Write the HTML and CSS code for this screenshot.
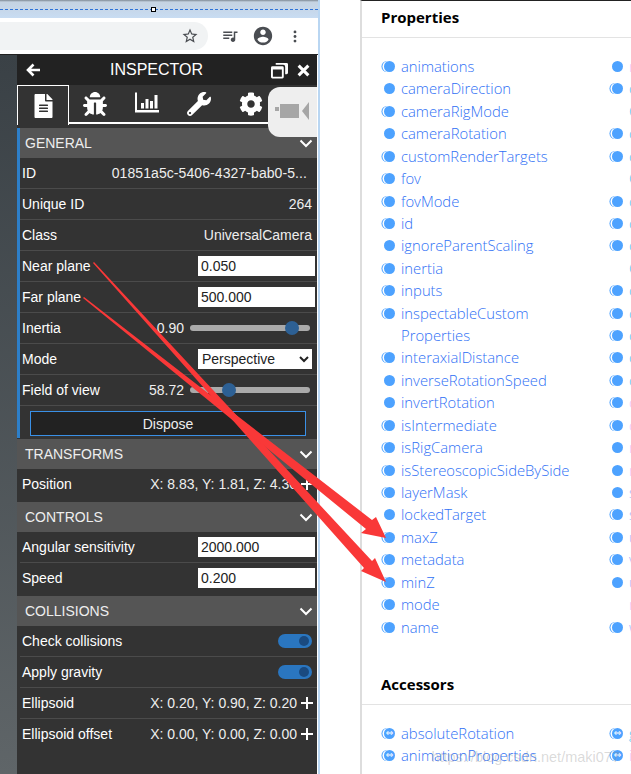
FILE: index.html
```html
<!DOCTYPE html>
<html lang="en">
<head>
<meta charset="utf-8">
<title>Inspector</title>
<link rel="stylesheet" href="styles.css">
</head>
<body>
<div class="page">
  <section class="browser">
    <div class="titlebar"><div class="dash"></div></div>
    <div class="toolbar">
      <div class="pill">
        <svg class="ti star" viewBox="0 0 24 24"><path d="M22 9.24l-7.19-.62L12 2 9.19 8.63 2 9.24l5.46 4.73L5.82 21 12 17.27 18.18 21l-1.63-7.03L22 9.24zM12 15.4l-3.76 2.27 1-4.28-3.32-2.88 4.38-.38L12 6.1l1.71 4.04 4.38.38-3.32 2.88 1 4.28L12 15.4z"/></svg>
      </div>
      <svg class="ti queue" viewBox="0 0 24 24"><path d="M15 6H3v2h12V6zm0 4H3v2h12v-2zM3 16h8v-2H3v2zM17 6v8.18c-.31-.11-.65-.18-1-.18-1.66 0-3 1.34-3 3s1.34 3 3 3 3-1.34 3-3V8h3V6h-5z"/></svg>
      <svg class="ti avatar" viewBox="0 0 24 24"><path d="M12 2C6.48 2 2 6.48 2 12s4.48 10 10 10 10-4.48 10-10S17.52 2 12 2zm0 3c1.66 0 3 1.34 3 3s-1.34 3-3 3-3-1.34-3-3 1.34-3 3-3zm0 14.2c-2.5 0-4.71-1.28-6-3.22.03-1.99 4-3.08 6-3.08 1.99 0 5.97 1.09 6 3.08-1.29 1.94-3.5 3.22-6 3.22z"/></svg>
      <svg class="ti kebab" viewBox="0 0 24 24"><circle cx="12" cy="5.5" r="2"/><circle cx="12" cy="12" r="2"/><circle cx="12" cy="18.500" r="2"/></svg>
    </div>
    <div class="workspace">
      <div class="strip"></div>
      <div class="inspector">
        <header class="ihead">
          <svg class="back" viewBox="0 0 16 16"><path d="M15 8H3M8.500 2.500L3 8l5.500 5.500" fill="none" stroke="#fff" stroke-width="2.600"/></svg>
          <h1 class="ititle">INSPECTOR</h1>
          <svg class="popout" viewBox="0 0 18 18"><path d="M5 1h11.500a1.500 1.500 0 0 1 1.500 1.500v9a1.500 1.500 0 0 1-1.500 1.500H15V5a2 2 0 0 0-2-2H5z" fill="#fff"/><path d="M1.500 4.500H12a1.500 1.500 0 0 1 1.500 1.500v10a1.500 1.500 0 0 1-1.500 1.500H1.500A1.500 1.500 0 0 1 0 16V6a1.500 1.500 0 0 1 1.500-1.500zM2 8v7.500h9.500V8z" fill="#fff"/></svg>
          <svg class="closex" viewBox="0 0 12 12"><path d="M1.500 1.500l9 9M10.500 1.500l-9 9" stroke="#fff" stroke-width="2.800" fill="none"/></svg>
        </header>
        <nav class="tabs">
          <div class="tab active"><svg class="file" viewBox="0 0 384 512"><path d="M224 136V0H24C10.700 0 0 10.700 0 24v464c0 13.300 10.700 24 24 24h336c13.300 0 24-10.700 24-24V160H248c-13.200 0-24-10.800-24-24zm64 236c0 6.600-5.400 12-12 12H108c-6.600 0-12-5.400-12-12v-8c0-6.600 5.400-12 12-12h168c6.600 0 12 5.400 12 12v8zm0-64c0 6.600-5.400 12-12 12H108c-6.600 0-12-5.400-12-12v-8c0-6.600 5.400-12 12-12h168c6.600 0 12 5.400 12 12v8zm0-72v8c0 6.600-5.400 12-12 12H108c-6.600 0-12-5.400-12-12v-8c0-6.600 5.400-12 12-12h168c6.600 0 12 5.400 12 12zm96-114.100v6.100H256V0h6.100c6.400 0 12.500 2.500 17 7l97.900 98c4.500 4.500 7 10.600 7 16.900z"/></svg></div>
          <div class="tab"><svg class="tico" viewBox="0 0 512 512"><path d="M511.988 288.900c-.478 17.430-15.217 31.100-32.653 31.100H424v16c0 21.864-4.882 42.584-13.600 61.145l60.228 60.228c12.496 12.497 12.496 32.758 0 45.255-12.498 12.497-32.759 12.496-45.256 0l-54.736-54.736C345.886 467.965 314.351 480 280 480V236c0-6.627-5.373-12-12-12h-24c-6.627 0-12 5.373-12 12v244c-34.351 0-65.886-12.035-90.636-32.108l-54.736 54.736c-12.498 12.497-32.759 12.496-45.256 0-12.496-12.497-12.496-32.758 0-45.255l60.228-60.228C92.882 378.584 88 357.864 88 336v-16H32.666C15.230 320 .491 306.330.013 288.900-.484 270.816 14.028 256 32 256h56v-58.745l-46.628-46.628c-12.496-12.497-12.496-32.758 0-45.255 12.498-12.497 32.758-12.497 45.256 0L141.255 160h229.489l54.627-54.627c12.498-12.497 32.758-12.497 45.256 0 12.496 12.497 12.496 32.758 0 45.255L424 197.255V256h56c17.972 0 32.484 14.816 31.988 32.900zM257 0c-61.856 0-112 50.144-112 112h224C369 50.144 318.856 0 257 0z"/></svg></div>
          <div class="tab"><svg class="tico" viewBox="0 0 24 24"><path d="M0 0.500h2V18h22v2.500H0z"/><rect x="6" y="11" width="3" height="5.500"/><rect x="10.500" y="7" width="3" height="9.500"/><rect x="15" y="9" width="3" height="7.500"/><rect x="19.500" y="3" width="3" height="13.500"/></svg></div>
          <div class="tab"><svg class="tico" viewBox="0 0 512 512"><path d="M507.730 109.100c-2.240-9.030-13.540-12.090-20.120-5.510l-74.360 74.360-67.880-11.310-11.310-67.880 74.360-74.360c6.620-6.620 3.430-17.900-5.660-20.160-47.380-11.740-99.550.91-136.580 37.930-39.640 39.640-50.550 97.100-34.050 147.200L18.740 402.760c-24.990 24.990-24.990 65.510 0 90.500 24.990 24.990 65.510 24.990 90.500 0l213.210-213.210c50.120 16.710 107.470 5.680 147.370-34.220 37.070-37.070 49.700-89.320 37.910-136.730zM64 472c-13.250 0-24-10.750-24-24 0-13.260 10.750-24 24-24s24 10.740 24 24c0 13.250-10.750 24-24 24z"/></svg></div>
          <div class="tab"><svg class="tico" viewBox="0 0 512 512"><path d="M487.400 315.700l-42.600-24.600c4.300-23.200 4.300-47 0-70.200l42.600-24.600c4.900-2.800 7.100-8.600 5.500-14-11.100-35.600-30-67.800-54.700-94.600-3.800-4.100-10-5.100-14.800-2.300L380.800 110c-17.900-15.400-38.500-27.300-60.800-35.100V25.800c0-5.600-3.900-10.500-9.400-11.700-36.700-8.200-74.300-7.800-109.200 0-5.500 1.200-9.400 6.100-9.400 11.700V75c-22.200 7.900-42.800 19.800-60.800 35.100L88.700 85.500c-4.900-2.800-11-1.900-14.800 2.300-24.700 26.700-43.600 58.900-54.700 94.600-1.700 5.400.6 11.200 5.500 14L67.300 221c-4.300 23.200-4.300 47 0 70.200l-42.600 24.600c-4.900 2.800-7.100 8.600-5.500 14 11.100 35.600 30 67.800 54.700 94.600 3.800 4.100 10 5.100 14.800 2.300l42.600-24.600c17.900 15.400 38.500 27.300 60.800 35.100v49.200c0 5.600 3.900 10.500 9.400 11.700 36.700 8.200 74.300 7.800 109.200 0 5.500-1.200 9.400-6.100 9.400-11.700v-49.200c22.200-7.900 42.800-19.800 60.800-35.100l42.600 24.600c4.900 2.800 11 1.900 14.800-2.300 24.700-26.700 43.600-58.900 54.700-94.600 1.500-5.500-.7-11.300-5.600-14.100zM256 336c-44.100 0-80-35.900-80-80s35.900-80 80-80 80 35.900 80 80-35.900 80-80 80z"/></svg></div>
          <div class="tabfill"></div>
        </nav>
        <div class="camera">
          <svg class="camico" viewBox="0 0 36 24"><rect x="0" y="7" width="4" height="4"/><rect x="5" y="4" width="19" height="14"/><path d="M27 11L34 2v18z"/></svg>
        </div>
        <div class="sections">
          <section class="group accent">
            <h2 class="ghead">GENERAL<svg class="chev" viewBox="0 0 14 9"><path d="M1.500 1.500L7 7l5.500-5.500" fill="none" stroke="#fff" stroke-width="2"/></svg></h2>
            <div class="row"><span>ID</span><span class="val idval">01851a5c-5406-4327-bab0-5...</span></div>
            <div class="row"><span>Unique ID</span><span class="val">264</span></div>
            <div class="row"><span>Class</span><span class="val">UniversalCamera</span></div>
            <div class="row"><span>Near plane</span><input class="num" value="0.050"></div>
            <div class="row"><span>Far plane</span><input class="num" value="500.000"></div>
            <div class="row"><span>Inertia</span><span class="sliderbox"><span class="val">0.90</span><span class="track"><span class="thumb" style="left:95px"></span></span></span></div>
            <div class="row"><span>Mode</span><select class="sel"><option>Perspective</option></select></div>
            <div class="row"><span>Field of view</span><span class="sliderbox"><span class="val">58.72</span><span class="track"><span class="thumb" style="left:32px"></span></span></span></div>
            <div class="btnrow"><button class="dispose">Dispose</button></div>
          </section>
          <section class="group">
            <h2 class="ghead">TRANSFORMS<svg class="chev" viewBox="0 0 14 9"><path d="M1.500 1.500L7 7l5.500-5.500" fill="none" stroke="#fff" stroke-width="2"/></svg></h2>
            <div class="row plain"><span>Position</span><span class="val">X: 8.83, Y: 1.81, Z: 4.30<svg class="plus" viewBox="0 0 12 12"><path d="M6 0v12M0 6h12" stroke="#fff" stroke-width="2"/></svg></span></div>
          </section>
          <section class="group">
            <h2 class="ghead">CONTROLS<svg class="chev" viewBox="0 0 14 9"><path d="M1.500 1.500L7 7l5.500-5.500" fill="none" stroke="#fff" stroke-width="2"/></svg></h2>
            <div class="row"><span>Angular sensitivity</span><input class="num" value="2000.000"></div>
            <div class="row plain"><span>Speed</span><input class="num" value="0.200"></div>
          </section>
          <section class="group">
            <h2 class="ghead">COLLISIONS<svg class="chev" viewBox="0 0 14 9"><path d="M1.500 1.500L7 7l5.500-5.500" fill="none" stroke="#fff" stroke-width="2"/></svg></h2>
            <div class="row"><span>Check collisions</span><span class="toggle"></span></div>
            <div class="row"><span>Apply gravity</span><span class="toggle"></span></div>
            <div class="row"><span>Ellipsoid</span><span class="val">X: 0.20, Y: 0.90, Z: 0.20<svg class="plus" viewBox="0 0 12 12"><path d="M6 0v12M0 6h12" stroke="#fff" stroke-width="2"/></svg></span></div>
            <div class="row plain"><span>Ellipsoid offset</span><span class="val">X: 0.00, Y: 0.00, Z: 0.00<svg class="plus" viewBox="0 0 12 12"><path d="M6 0v12M0 6h12" stroke="#fff" stroke-width="2"/></svg></span></div>
          </section>
        </div>
      </div>
    </div>
    <div class="handle"></div>
  </section>

  <main class="docs">
    <h3 class="dhead">Properties</h3>
    <div class="cols">
      <ul class="list">
        <li class="inh">animations</li>
        <li>cameraDirection</li>
        <li class="inh">cameraRigMode</li>
        <li>cameraRotation</li>
        <li class="inh">customRenderTargets</li>
        <li class="inh">fov</li>
        <li class="inh">fovMode</li>
        <li class="inh">id</li>
        <li>ignoreParentScaling</li>
        <li class="inh">inertia</li>
        <li class="inh">inputs</li>
        <li class="inh">inspectableCustom<br>Properties</li>
        <li class="inh">interaxialDistance</li>
        <li>inverseRotationSpeed</li>
        <li>invertRotation</li>
        <li class="inh">isIntermediate</li>
        <li class="inh">isRigCamera</li>
        <li class="inh">isStereoscopicSideBySide</li>
        <li class="inh">layerMask</li>
        <li>lockedTarget</li>
        <li class="inh">maxZ</li>
        <li class="inh">metadata</li>
        <li class="inh">minZ</li>
        <li class="inh">mode</li>
        <li class="inh">name</li>
      </ul>
      <ul class="list side">
        <li class="pink">noRotationConstraint</li>
        <li class="inh cyan">onAccessibilityTag<br>ChangedObservable</li>
        <li class="inh cyan">onAfterCheckInputs</li>
        <li class="inh cyan">onAfterRenderObservable<br>Observable</li>
        <li class="inh cyan">onCollide</li>
        <li class="inh cyan">onDispose</li>
        <li class="inh cyan">onDisposeObservable<br>Observable</li>
        <li class="inh cyan">onProjection</li>
        <li class="inh cyan">onRestoreState</li>
        <li class="inh cyan">onViewMatrix</li>
        <li class="inh cyan">orthoBottom</li>
        <li class="inh cyan">orthoLeft</li>
        <li class="inh pink">orthoRight</li>
        <li class="inh pink">orthoTop</li>
        <li class="pink">rigCameras</li>
        <li class="pink">rotation</li>
        <li class="lav">speed</li>
        <li class="inh lav">state</li>
        <li class="inh lav">upVector</li>
        <li class="inh lav">viewport</li>
        <li class="lav">updateUp<br><span class="pinkline">rotation</span></li>
        <li class="inh lav">worldMatrix</li>
      </ul>
    </div>
    <h3 class="dhead acc">Accessors</h3>
    <div class="cols">
      <ul class="list">
        <li class="get">absoluteRotation</li>
        <li class="get">animationProperties</li>
      </ul>
      <ul class="list side">
        <li class="get cyan">globalPosition</li>
        <li class="get pink">isDisposed</li>
      </ul>
    </div>
    <div class="mark">https://blog.csdn.net/maki077</div>
  </main>

  <svg class="arrows" viewBox="0 0 631 774">
    <polygon points="93,263 94,262 372,561 375,558 386,582 361,571 364,568"/>
    <polygon points="83,298 84,297 372,520 376,517 386,538 361,533 366,529"/>
  </svg>
</div>
</body>
</html>
```
FILE: styles.css
```css
* { box-sizing: border-box; }
html, body { margin: 0; padding: 0; height: 100%; background: #fff; overflow: hidden; }
.page { position: relative; width: 631px; height: 774px; overflow: hidden; display: flex; font-family: "Liberation Sans", Arial, sans-serif; }

/* browser window */
.browser { position: relative; width: 320px; height: 774px; display: flex; flex-direction: column; border-right: 2px solid #b9d6f2; flex: none; }
.titlebar { height: 18px; background: linear-gradient(#7f8a96 0, #c5d3e2 2px, #c8dcf2 100%); padding-top: 9px; }
.dash { border-top: 1px dashed #2d73d8; }
.handle { position: absolute; left: 151px; top: 7px; width: 5px; height: 5px; background: #fff; border: 1px solid #000; }
.toolbar { height: 37px; background: #fff; display: flex; align-items: center; border-bottom: 1px solid #222; }
.pill { width: 208px; height: 28px; background: #f1f3f4; border-radius: 0 14px 14px 0; display: flex; align-items: center; justify-content: flex-end; padding-right: 9px; }
.ti { width: 18px; height: 18px; fill: #4a4d52; flex: none; }
.queue { margin-left: 13px; }
.avatar { width: 22px; height: 22px; margin-left: 13px; }
.kebab { margin-left: 12px; height: 17px; }

.workspace { flex: 1; display: flex; min-height: 0; }
.strip { width: 17px; background: linear-gradient(#3a4146, #5f6568); flex: none; }
.inspector { position: relative; width: 300px; background: #333; color: #fff; font-size: 14px; display: flex; flex-direction: column; }
.ihead { height: 30px; background: #222; display: flex; align-items: center; flex: none; padding-left: 8px; }
.back { width: 16px; height: 16px; flex: none; }
.ititle { margin: 0 0 0 69px; font-size: 16px; font-weight: 400; color: #fff; width: 93px; white-space: nowrap; }
.popout { width: 17px; height: 17px; margin-left: 68px; flex: none; }
.closex { width: 13px; height: 13px; margin-left: 9px; flex: none; }

.tabs { height: 39px; display: flex; background: #333; flex: none; }
.tab { width: 52px; display: flex; align-items: center; justify-content: center; border-bottom: 2px solid #fff; fill: #fff; }
.tab.active { border: 1px solid #fff; border-bottom: 0; background: #333; height: 40px; }
.tabfill { width: 40px; border-bottom: 2px solid #fff; }
.file { width: 19px; height: 24px; }
.tico { width: 24px; height: 24px; }
.camera { position: absolute; left: 251px; top: 32px; width: 49px; height: 50px; background: #eee; border-radius: 12px 0 0 12px; display: flex; align-items: center; justify-content: center; }
.camico { width: 36px; height: 24px; fill: #a6a6a6; }

.sections { margin-top: 4px; }
.group { margin-bottom: 2px; }
.group.accent { margin-bottom: 1px; }
.accent { border-left: 3px solid #2d7fc9; }
.ghead { margin: 0; height: 30px; background: #555; color: #eee; font-size: 14px; font-weight: 400; display: flex; align-items: center; justify-content: space-between; padding: 0 4px 0 8px; }
.accent .ghead { padding-left: 5px; }
.chev { width: 14px; height: 9px; }
.row { height: 31px; margin-left: 3px; padding: 0 5px 0 2px; display: flex; align-items: center; justify-content: space-between; border-bottom: 1px solid #4b4b4b; white-space: nowrap; }
.accent .row { margin-left: 0; }
.row.plain { border-bottom-color: transparent; }
.val { color: #eee; display: inline-flex; align-items: center; }
.idval { margin-right: 5px; letter-spacing: .08px; }
.plus { width: 12px; height: 12px; margin-left: 4px; margin-right: -1px; }
.num { width: 117px; height: 20px; margin-right: -3px; border: 0; background: #fff; padding: 0 3px; font: 14px "Liberation Sans", Arial, sans-serif; color: #222; }
.sel { width: 114px; height: 20px; border: 0; background: #fff; font: 14px "Liberation Sans", Arial, sans-serif; color: #222; padding: 0; }
.sliderbox { display: flex; align-items: center; }
.track { position: relative; display: block; width: 120px; height: 6px; margin: 0 2px 0 6px; background: #aaa; border-radius: 3px; }
.thumb { position: absolute; top: -4px; width: 14px; height: 14px; border-radius: 50%; background: #2d6094; }
.btnrow { height: 32px; padding: 5px 10px 2px 10px; }
.dispose { display: block; width: 276px; height: 25px; background: #222; color: #eee; border: 1px solid #3a90e6; font: 14px "Liberation Sans", Arial, sans-serif; padding: 0; }
.toggle { position: relative; width: 34px; height: 14px; background: #2a76c0; border-radius: 7px; }
.toggle::after { content: ""; position: absolute; right: 3px; top: 2px; width: 10px; height: 10px; border-radius: 50%; background: #1a4a80; }

/* documentation */
.docs { position: relative; margin-left: 40px; flex: 1; min-width: 0; border-left: 2px solid #ddd; border-top: 1px solid #222; font-family: "Open Sans", sans-serif; overflow: hidden; }
.dhead { margin: 0; height: 37px; padding: 6px 0 0 19px; border-bottom: 1px solid #e3e3e3; font-size: 15px; font-weight: 700; color: #000; line-height: 20px; }
.acc { margin-top: 30px; height: 37px; }
.cols { display: flex; width: 500px; padding: 17px 0 0 19px; }
.list { list-style: none; margin: 0; padding: 0; width: 228px; flex: none; }
.list li { position: relative; padding-left: 20px; font-size: 14.800px; font-weight: 300; line-height: 22.420px; color: #2f70f5; white-space: nowrap; }
.list li::before { content: ""; position: absolute; left: 3px; top: 6px; width: 11px; height: 11px; border-radius: 50%; background: #4da2ff; }
.list li.inh::before { box-shadow: -1.500px 0 0 0 #fff, -2.500px 0 0 0 #4da2ff; }
.list li.get::before { box-shadow: -1.500px 0 0 0 #fff, -2.500px 0 0 0 #4da2ff; }
.list li.get::after { content: "⇔"; position: absolute; left: 3px; top: 6px; width: 11px; height: 11px; font: 9px/11px "DejaVu Sans", sans-serif; color: #fff; text-align: center; }
.side li.pink { color: #f2c4f7; }
.side li.cyan { color: #4dc8ef; }
.side li.lav { color: #a9b4f5; }
.pinkline { color: #f2c4f7; }
.mark { position: absolute; right: 11px; bottom: 9px; font: 14.500px "Liberation Sans", Arial, sans-serif; color: rgba(140,140,140,.32); white-space: nowrap; }

.arrows { position: absolute; left: 0; top: 0; width: 631px; height: 774px; fill: #f93838; pointer-events: none; }
```
